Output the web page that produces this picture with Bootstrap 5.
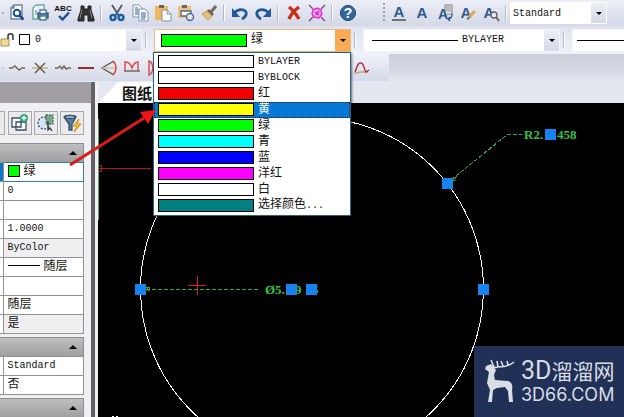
<!DOCTYPE html>
<html lang="zh-CN">
<head>
<meta charset="utf-8">
<meta name="viewport" content="width=device-width, initial-scale=1">
<title>CAD</title>
<link href="https://cdn.jsdelivr.net/npm/bootstrap@5.3.0/dist/css/bootstrap.min.css" rel="stylesheet">
<style>
body{font:12px/16px "Liberation Mono","Noto Sans CJK SC",monospace;color:#111;background:#e4e6f0;overflow-x:hidden}
.lat{font-size:10px}
.bar{background:linear-gradient(#eceef7,#d4d7e6)}
.bar1{height:26px}
.bar2{height:28px;background:linear-gradient(#dfe2ee,#eff1f8)}
.bar3{height:28px;background:linear-gradient(#cccfd9,#d3d6e0 50%,#e6e8f4)}
.bar3-in{width:389px;height:27px;background:linear-gradient(#f0f2f9,#d6d9e8)}
.tool{width:23px;height:24px;padding:0;border:0;background:none;flex:none;display:flex;align-items:center;justify-content:center}
.tool svg{width:18px;height:18px;fill:none;stroke:#2b5c95;stroke-width:1.4}
.tool.cut{width:5px;overflow:hidden}
.vsep{width:8px;height:16px;flex:none;background:linear-gradient(90deg,#0000 3px,#b3b8c9 3px 4px,#fff 4px 5px,#0000 5px)}
.vsep.wide{width:12px}
.grip{width:4px;height:20px;margin-left:24px;flex:none;background:repeating-linear-gradient(#9a9fb2 0 2px,#0000 2px 4px) 0 0/2px 100% no-repeat}
.combo{height:23px;background:#fff;border:1px solid #f4f5fa;padding:0;color:#111;text-align:left;font:inherit;line-height:16px}
.combo.layer{width:142px;border-left:0}
.combo.w196{width:197px}
.combo.open{border-color:#e9bd80;padding-left:6px}
.arr{width:15px;align-self:stretch;background:linear-gradient(#eceef5,#d5d8e5);display:flex;align-items:center;justify-content:center;flex:none}
.arr::after{content:"";border:3px solid #0000;border-top:3px solid #000;border-bottom:0}
.open .arr{background:#f9aa55}
.std{width:97px;position:relative;height:22px}
.std select{width:100%;height:22px;border:0;border-radius:0;padding:0 18px 0 3px;background:#fff;font:10px "Liberation Mono",monospace;color:#111}
.std .arr{position:absolute;right:1px;top:1px;bottom:1px;pointer-events:none}
.dash{height:1px;background:#000}
.lt-name{width:86px;padding-left:4px}
.sw{width:96px;height:13px;border:1px solid #000;flex:none}
.sw.top{width:86px}
.menu{position:absolute;top:23px;left:-1px;width:198px;z-index:5;background:#fff;border:1px solid #2a6286;padding:1px 0;box-shadow:1px 1px 2px #0008}
.menu button{height:16px;width:100%;border:0;padding:0 0 0 4px;background:#fff;display:flex;align-items:center;gap:4px;color:#111;line-height:16px}
.menu button.sel{background:#0878d7;color:#fff;outline:1px dotted #222;outline-offset:-1px}
.c-w{background:#fff}.c-r{background:#f00000}.c-y{background:#ff0}.c-g{background:#0f0}.c-c{background:#0ff}.c-b{background:#00f}.c-m{background:#f0f}.c-t{background:#008080}
.side{width:98px;flex:none;background:#f0eff1;border-right:3px solid #f1f1f3;box-shadow:inset -4px 0 #626165}
.side-head{height:21px;width:91px;background:#a19fa3}
.side-tools{padding:8px 0 8px;gap:2px}
.pbtn{width:24px;height:24px;border:1px solid #a9a8ab;background:#eceaec;padding:0;display:flex;align-items:center;justify-content:center}
.pbtn svg{width:20px;height:20px;fill:none;stroke:#33516b;stroke-width:1.3}
.pbtn.cut{width:5px;border-left:0;margin-right:1px}
.sec{width:84px;height:19px;border:1px solid #8e8d90;border-left:0;border-bottom:0;background:linear-gradient(#bebdbf,#9f9ea0);display:flex;align-items:center;justify-content:flex-end;padding:0 6px}
.sec::after{content:"";border:4px solid #0000;border-bottom:4px solid #000;border-top:0}
.props{width:84px;margin-bottom:3px;border-collapse:collapse;table-layout:fixed;background:#fff}
.props td,.props th{height:19px;padding:0 0 0 4px;border:1px solid #929194;line-height:16px;white-space:nowrap;font-weight:400}
.props th{width:3px;padding:0;border-left:0}
.props .ro td{background:#efeef0}
.props .act td{border:1px solid #2b8393}
.props .act th{background:#0878c8}
.chip{width:12px;height:12px;border:1px solid #000;display:inline-block;vertical-align:-2px;margin-right:4px}
.ltype{width:32px;height:1px;background:#000;display:inline-block;vertical-align:4px;margin-right:4px}
.tabs{height:21px}
.tab{height:21px;width:100px;padding:0 0 0 24px;border:0;background:#fff;clip-path:polygon(20px 0,100% 0,100% 100%,0 100%);font:bold 15px/16px "Noto Sans CJK SC",sans-serif;text-align:left;color:#111;white-space:nowrap;overflow:hidden}
.draw{background:#000;position:relative;overflow:hidden;min-height:314px}
.draw>svg{position:absolute;left:0;top:0;width:526px;height:314px}
.dim{fill:#35c248;font:bold 13px "Liberation Serif",serif}
.brand{position:absolute;right:0;bottom:0;width:150px;height:71px;background:#213056;color:#d9dde5;padding:0 0 0 9px;font-family:"Noto Sans CJK SC",sans-serif}
.brand svg{width:34px;height:46px;flex:none}
.brand-a{font-size:21px;line-height:26px;white-space:nowrap}
.brand-a span{font-size:25px;font-family:Roboto,sans-serif}
.brand-b{font:18px/22px Inter,sans-serif;white-space:nowrap}
.pointer{position:absolute;left:66px;top:104px;width:92px;height:66px;z-index:6;pointer-events:none}
</style>
<script src="https://cdn.jsdelivr.net/npm/bootstrap@5.3.0/dist/js/bootstrap.bundle.min.js"></script>
</head>
<body class="min-vh-100 d-flex flex-column position-relative">
<header>
<div class="bar bar1 d-flex align-items-center" role="toolbar" aria-label="标准">
 <button class="tool cut" aria-label="打印"><svg viewBox="0 0 18 18"><path d="M10 5v8" stroke="#a08a50" stroke-width="4"/></svg></button>
 <button class="tool" aria-label="预览"><svg viewBox="0 0 18 18"><path d="M6 1h8v14H3V4z" fill="#fff" stroke="#6883a1"/><path d="M3 4h3V1" stroke="#6883a1"/><circle cx="9" cy="9" r="3.3" stroke="#174d91" stroke-width="2"/><path d="M11.5 11.5l4 4" stroke="#174d91" stroke-width="2.5"/></svg></button>
 <button class="tool" aria-label="发布"><svg viewBox="0 0 18 18"><path d="M5 1h8v4M9 15H2V4l3-3" fill="#fff" stroke="#62a8a0"/><path d="M5 6v5" stroke="#62a8a0"/><path d="M7 9h10v5H7z" fill="#527ba4" stroke="#315d89"/><path d="M9 9V6h6v3M9 12h6v4H9z" fill="#fff" stroke="#527ba4"/></svg></button>
 <button class="tool" aria-label="拼写"><svg viewBox="0 0 18 18"><text x="9" y="7" text-anchor="middle" font-family="Liberation Sans" font-size="8" font-weight="bold" fill="#111" stroke="none">ABC</text><path d="M5 12l3.500 3.500 6.500-7" stroke="#174d91" stroke-width="2.400"/></svg></button>
 <button class="tool" aria-label="查找"><svg viewBox="0 0 18 18"><path d="M4 2h3v3h4V2h3v4l3 9v2h-6v-6H7v6H1v-2l3-9z" fill="#333" stroke="#222" stroke-width="1"/><path d="M5 6L3 14M13 6l2 8" stroke="#888" stroke-width="1"/></svg></button>
 <span class="vsep"></span>
 <button class="tool" aria-label="剪切"><svg viewBox="0 0 18 18"><path d="M4 1l7 11M14 1L7 12" stroke="#56616e" stroke-width="2"/><circle cx="5" cy="13.500" r="2.500" stroke="#1760a7" stroke-width="2.400"/><circle cx="13" cy="13.500" r="2.500" stroke="#1760a7" stroke-width="2.400"/></svg></button>
 <button class="tool" aria-label="复制"><svg viewBox="0 0 18 18"><path d="M2 1h6l3 3v9H2z" fill="#fff" stroke="#8095ad" stroke-width="1"/><path d="M4 4h3M4 6h5M4 8h5M4 10h5" stroke-width="1"/><path d="M8 5h6l3 3v9H8z" fill="#fff" stroke="#8095ad" stroke-width="1"/><path d="M10 9h5M10 11h5M10 13h5M10 15h4" stroke-width="1"/></svg></button>
 <button class="tool" aria-label="粘贴"><svg viewBox="0 0 18 18"><path d="M1 2h13v14H1z" fill="#efb85f" stroke="none"/><path d="M5 1h5v3H5z" fill="#666" stroke="none"/><path d="M8 6h5l4 4v7H8z" fill="#fff" stroke="#8290a3" stroke-width="1"/><path d="M13 6v4h4" stroke="#8290a3" stroke-width="1"/></svg></button>
 <button class="tool" aria-label="粘贴为块"><svg viewBox="0 0 18 18"><path d="M1 2h13v12H1z" fill="#efc078" stroke="none"/><path d="M5 1h5v3H5z" fill="#666" stroke="none"/><path d="M4 7h10v5H4z" fill="#fff" stroke="#536c8c"/><circle cx="13" cy="13" r="3.500" fill="#dfe8f1" stroke="#536c8c"/></svg></button>
 <button class="tool" aria-label="特性匹配"><svg viewBox="0 0 18 18"><path d="M2 10l6-4 5 5-5 5z" fill="#e7bd77" stroke="#c79a57" stroke-width="1"/><path d="M8 6l5 5" stroke="#666" stroke-width="2.500"/><path d="M11 8l5-6" stroke="#7b6a55" stroke-width="3"/></svg></button>
 <span class="vsep"></span>
 <button class="tool" aria-label="放弃"><svg viewBox="0 0 18 18"><path d="M3 9c6-6 14-3 12 2-1 2-2 3-4 4" stroke="#205b98" stroke-width="2.800"/><path d="M1 4v9h8z" fill="#205b98" stroke="none"/></svg></button>
 <button class="tool" aria-label="重做"><svg viewBox="0 0 18 18"><path d="M15 9C9 3 1 6 3 11c1 2 2 3 4 4" stroke="#205b98" stroke-width="2.800"/><path d="M17 4v9H9z" fill="#205b98" stroke="none"/></svg></button>
 <span class="vsep"></span>
 <button class="tool" aria-label="删除"><svg viewBox="0 0 18 18"><path d="M4 3c4 3 7 7 10 12M14 3C10 6 6 10 4 15" stroke="#c92d16" stroke-width="3.400"/></svg></button>
 <button class="tool" aria-label="清理"><svg viewBox="0 0 18 18"><path d="M1 1l4 4M17 1l-4 4M1 17l4-4M17 17l-4-4" stroke="#7b4b83"/><path d="M5 6l4-2 4 2 1 4-3 4-5-1-2-3z" fill="#f6a0ed" stroke="#dc32ce"/><path d="M7 8l4 3M11 7l-3 4" stroke="#c22cb8"/></svg></button>
 <span class="vsep"></span>
 <button class="tool" aria-label="帮助"><svg viewBox="0 0 18 18"><circle cx="9" cy="9" r="7.600" fill="#356699" stroke="#214e7b" stroke-width="1"/><text x="9" y="14" text-anchor="middle" font-family="Liberation Sans" font-size="14" font-weight="bold" fill="#fff" stroke="none">?</text></svg></button>
 <span class="grip"></span>
 <button class="tool" aria-label="文字"><svg viewBox="0 0 18 18"><text x="9" y="13" text-anchor="middle" font-family="Liberation Sans" font-size="15" font-weight="bold" fill="#2c5b8c" stroke="none">A</text><path d="M2 16h14" stroke="#444"/></svg></button>
 <button class="tool" aria-label="单行文字"><svg viewBox="0 0 18 18"><text x="9" y="14" text-anchor="middle" font-family="Liberation Sans" font-size="15" font-weight="bold" fill="#2c5b8c" stroke="none">A</text></svg></button>
 <button class="tool" aria-label="编辑文字"><svg viewBox="0 0 18 18"><path d="M9 1h7v9H9z" fill="#fff" stroke="#777" stroke-width="1"/><path d="M10 3h5M10 5h5M10 7h5" stroke="#777" stroke-width="1"/><text x="7" y="15" text-anchor="middle" font-family="Liberation Sans" font-size="14" font-weight="bold" fill="#2c5b8c" stroke="none">A</text><path d="M16 10c0 3-1 5-4 5m2-2l-2 2 2 2"/></svg></button>
 <button class="tool" aria-label="文字样式"><svg viewBox="0 0 18 18"><text x="7" y="14" text-anchor="middle" font-family="Liberation Sans" font-size="15" font-weight="bold" fill="#2c5b8c" stroke="none">A</text><path d="M10 13l6-6" stroke="#e0a84d" stroke-width="3"/><path d="M8 15l2-1" stroke="#555"/></svg></button>
 <button class="tool" aria-label="查找文字"><svg viewBox="0 0 18 18"><text x="7" y="14" text-anchor="middle" font-family="Liberation Sans" font-size="15" font-weight="bold" fill="#2c5b8c" stroke="none">A</text><circle cx="12" cy="11" r="3" fill="#e8edf5" stroke="#666"/><path d="M14 13l3 4" stroke="#666" stroke-width="2"/></svg></button>
 <span class="vsep"></span>
 <label class="std"><select class="form-select" aria-label="文字样式"><option>Standard</option></select><span class="arr"></span></label>
</div>
<div class="bar bar2 d-flex align-items-center">
 <button class="combo layer d-flex align-items-center" aria-label="图层">
  <svg width="15" height="16" viewBox="0 0 15 16" fill="none"><path d="M1 7h8v7H1z" fill="#f2dc93" stroke="#a3905c"/><path d="M8 7V4c0-3 5-3 5 0v4" stroke="#333" stroke-width="1.500"/></svg>
  <svg class="ms-1" width="12" height="12"><path d="M.5.500h10v10H.5z" fill="#fff" stroke="#000"/></svg>
  <span class="lat flex-grow-1 ps-1">0</span><span class="arr"></span>
 </button>
 <span class="vsep wide"></span>
 <div class="position-relative">
  <button class="combo w196 open d-flex align-items-center" aria-label="颜色" aria-expanded="true"><span class="sw top c-g me-1"></span><span class="flex-grow-1">绿</span><span class="arr"></span></button>
  <div class="menu" role="listbox" aria-label="颜色">
   <button role="option"><span class="sw c-w"></span><span class="lat">BYLAYER</span></button>
   <button role="option"><span class="sw c-w"></span><span class="lat">BYBLOCK</span></button>
   <button role="option"><span class="sw c-r"></span>红</button>
   <button role="option" class="sel" aria-selected="true"><span class="sw c-y"></span>黄</button>
   <button role="option"><span class="sw c-g"></span>绿</button>
   <button role="option"><span class="sw c-c"></span>青</button>
   <button role="option"><span class="sw c-b"></span>蓝</button>
   <button role="option"><span class="sw c-m"></span>洋红</button>
   <button role="option"><span class="sw c-w"></span>白</button>
   <button role="option"><span class="sw c-t"></span><span>选择颜色<span class="lat">...</span></span></button>
  </div>
 </div>
 <span class="vsep wide"></span>
 <button class="combo w196 d-flex align-items-center ps-1" aria-label="线型"><span class="dash flex-grow-1 ms-1"></span><span class="lat lt-name">BYLAYER</span><span class="arr"></span></button>
 <span class="vsep wide"></span>
 <button class="combo flex-grow-1 d-flex align-items-center ps-1 border-end-0" aria-label="线宽"><span class="dash flex-grow-1"></span></button>
</div>
<div class="bar3">
 <div class="bar3-in d-flex align-items-center" role="toolbar" aria-label="曲线">
  <button class="tool cut" aria-label="线"><svg viewBox="0 0 18 18"><path d="M6 9h6"/></svg></button>
  <button class="tool" aria-label="波浪线"><svg viewBox="0 0 18 18"><path d="M1 9h3l3-2 4 4 3-2h3" stroke="#6e694a"/></svg></button>
  <button class="tool" aria-label="交叉"><svg viewBox="0 0 18 18"><path d="M1 9h16" stroke="#c0aa78"/><path d="M4 4l10 10M14 4L4 14" stroke="#5d5340"/></svg></button>
  <button class="tool" aria-label="折线"><svg viewBox="0 0 18 18"><path d="M1 9h3l2-2 2 3 2-3 2 3 2-1h3" stroke="#6e694a"/></svg></button>
  <button class="tool" aria-label="直线"><svg viewBox="0 0 18 18"><path d="M1 9h16" stroke="#8e3034" stroke-width="2"/></svg></button>
  <button class="tool" aria-label="扇形"><svg viewBox="0 0 18 18"><path d="M14 2L2 9l12 7" stroke="#5b544a"/><path d="M2 9h14" stroke="#d3b98a"/><path d="M13 2c4 4 4 10 0 14" stroke="#e23a3a"/></svg></button>
  <button class="tool" aria-label="弧"><svg viewBox="0 0 18 18"><path d="M2 12V3c4 0 6 3 7 6 1-3 3-6 6-6v9" stroke="#d94848"/><path d="M1 12h16" stroke="#6b6255"/></svg></button>
  <button class="tool" aria-label="半圆"><svg viewBox="0 0 18 18"><path d="M3 2c5 2 5 12 0 14z" stroke="#d94848"/></svg></button>
  <button class="tool ms-auto me-3" aria-label="样条"><svg viewBox="0 0 18 18"><path d="M1 14h3l3-1h8" stroke="#c9a67c"/><path d="M2 13C4 8 5 3 8 4c3 0 3 7 5 9l3-2" stroke="#a92d36"/></svg></button>
 </div>
</div>
</header>
<main class="d-flex flex-grow-1">
 <aside class="side">
  <div class="side-head"></div>
  <div class="side-tools d-flex">
   <button class="pbtn cut" aria-label="类型"></button>
   <button class="pbtn" aria-label="添加选择"><svg viewBox="0 0 20 20"><path d="M2 5h9v9H2zM6 9h10v8H6z" fill="#fff"/><circle cx="14" cy="5" r="4" fill="#35a57c" stroke="none"/><path d="M11.500 5h5M14 2.500v5" stroke="#fff"/></svg></button>
   <button class="pbtn" aria-label="选择对象"><svg viewBox="0 0 20 20"><circle cx="8" cy="10" r="6" stroke-dasharray="2 1.500" fill="#d3e2f4"/><path d="M10 2h7v9h-7z" fill="#76a889" stroke="#4d7f61" stroke-dasharray="2 1"/><path d="M12 8v9l2-2 2 3" stroke="#333"/></svg></button>
   <button class="pbtn" aria-label="快速选择"><svg viewBox="0 0 20 20"><path d="M2 4c0-2 12-2 12 0l-4 7v6H7v-6z" fill="#597d9d"/><ellipse cx="8" cy="4" rx="5" ry="1.500" fill="#b9d4e8"/><path d="M17 6l-6 7h4l-3 6 7-8h-4z" fill="#ffc629" stroke="#d08a17" stroke-width="1"/></svg></button>
  </div>
  <div class="sec"></div>
  <table class="props">
   <tr class="act"><th></th><td><span class="chip c-g"></span>绿</td></tr>
   <tr><th></th><td class="lat">0</td></tr>
   <tr><th></th><td></td></tr>
   <tr><th></th><td class="lat">1.0000</td></tr>
   <tr class="ro"><th></th><td class="lat">ByColor</td></tr>
   <tr><th></th><td><span class="ltype"></span>随层</td></tr>
   <tr><th></th><td></td></tr>
   <tr><th></th><td>随层</td></tr>
   <tr class="ro"><th></th><td>是</td></tr>
  </table>
  <div class="sec"></div>
  <table class="props">
   <tr><th></th><td class="lat">Standard</td></tr>
   <tr><th></th><td>否</td></tr>
  </table>
  <div class="sec"></div>
 </aside>
 <section class="flex-grow-1 d-flex flex-column">
  <div class="tabs"><button class="tab">图纸·</button></div>
  <div class="draw flex-grow-1">
   <svg viewBox="0 0 526 314" fill="none" shape-rendering="crispEdges">
    <path d="M0 16v101" stroke="#4fa95c" stroke-width="2"/>
    <path d="M1 65.500h52M1 62.500h2v6h-2" stroke="#b0161c"/>
    <path d="M90 182.500h18" stroke="#e0181e"/><path d="M99.500 173v19" stroke="#e0181e"/>
    <circle cx="214" cy="186" r="171.500" stroke="#fff"/>
    <path d="M48 186.500h114M353 77l57-46h14" stroke="#35a842" stroke-dasharray="4 2"/>
    <path d="M48 184h4l-1 4zM352 76l4 2 2-4z" stroke="#35a842"/>
    <text class="dim" x="167" y="191">Ø5.</text><text class="dim" x="197" y="191">9</text><text class="dim" x="214" y="191">5</text>
    <text class="dim" x="426" y="36">R2.</text><text class="dim" x="459" y="36">458</text>
    <path d="M37 181h11v11H37zM380 181h11v11h-11zM344 75h11v11h-11zM447 26h11v11h-11zM188 181h11v11h-11zM208 181h11v11h-11z" fill="#1683ef"/>
    <path d="M14 313.500h2M18 313.500h2" stroke="#fff"/>
   </svg>
   <div class="brand d-flex align-items-center gap-1">
    <svg viewBox="0 0 34 46" fill="#d9dde5"><path d="M3 7l5-2 2 3 3 3-2 5 1 5 13 1c4 1 5 5 4 9l1 12h-4l-1-11-3-4-8 1-4 2-1 12H5l2-12-3-7 2-11-4-3z"/><path d="M8 6c1 3 4 3 7 2 7 0 11-1 16-5M11 8L8 1M15 8l-1-6M20 7l-2-5M25 6l-1-4" fill="none" stroke="#d9dde5" stroke-width="1.600"/></svg>
    <div><div class="brand-a"><span>3D</span>溜溜网</div><div class="brand-b">3D66.COM</div></div>
   </div>
  </div>
 </section>
</main>
<svg class="pointer" viewBox="0 0 92 66"><path d="M4 61L78 14" stroke="#dc1c1c" stroke-width="3"/><path d="M90 6L82 20 74 8z" fill="#f01414"/></svg>
</body>
</html>
